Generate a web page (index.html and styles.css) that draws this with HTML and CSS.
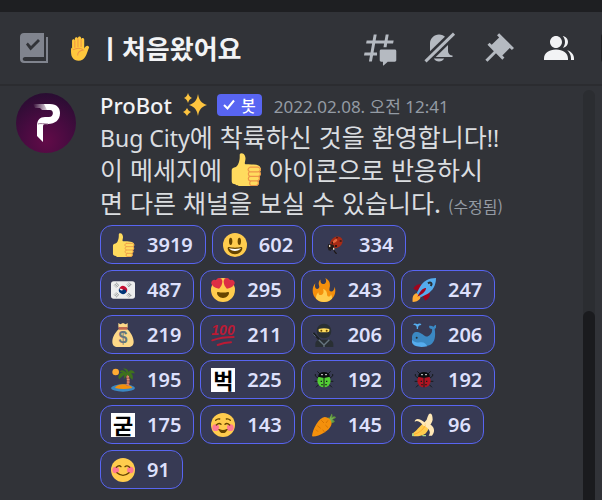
FILE: index.html
```
<!DOCTYPE html>
<html lang="ko">
  <head>
    <meta charset="UTF-8" />
    <meta name="viewport" content="width=device-width, initial-scale=1.0" />
    <title>처음왔어요</title>
    <link rel="stylesheet" href="styles.css">
  </head>
  <body>
    <div class="titlebar"></div>

    <header class="header">
      <svg class="icon rules" viewBox="0 0 36 36" aria-hidden="true">
        <path fill-rule="evenodd" d="M8 3H28V27H9C6 27 6 31 9 31H30V7H32V33H8C5.500 33 4 31.500 4 29V7C4 4.500 5.500 3 8 3ZM10 14.500L14.500 20.500L24 11L22 9L15 16L11.800 12.500Z" />
      </svg>
      <h1 class="channel">
        <svg class="hand" viewBox="0 0 36 36" role="img" aria-label="손">
          <path fill="#ffc83d" d="M8 19V7c0-3 4-3 4 0V4c0-3 4.500-3 4.500 0V3c0-3 4.500-3 4.500 0v2c0-3 4.500-3 4.500 0v13c2-3 4-5 6.500-3 1 1 .5 2-.5 4-2 5-3 11-8 15-5 3-12 2-15-3-2-3-2-7-2-11 0-4 1.500-4 1.500-1z" />
          <path fill="none" stroke="#ef9645" stroke-width="1.500" d="M12 7v10M16.500 4v12M21 5v11M9 20c6-3 11-3 15 0-5 1-8 4-8 8" />
        </svg>
        <span>ㅣ처음왔어요</span>
      </h1>
      <div class="toolbar">
        <button type="button" aria-label="스레드">
          <svg class="icon" viewBox="0 0 24 24"><path d="M5.433 21C5.358 21 5.302 20.933 5.315 20.859L6 17H2.143C2.068 17 2.012 16.933 2.025 16.859L2.333 15.099C2.343 15.042 2.392 15 2.451 15H6.350L7.410 9H3.553C3.478 9 3.422 8.933 3.435 8.859L3.743 7.099C3.753 7.042 3.802 7 3.861 7H7.760L8.452 3.099C8.463 3.042 8.512 3 8.570 3H10.327C10.401 3 10.458 3.067 10.445 3.141L9.760 7H15.760L16.452 3.099C16.463 3.042 16.512 3 16.571 3H18.327C18.401 3 18.458 3.067 18.445 3.141L17.760 7H21.617C21.692 7 21.748 7.067 21.735 7.141L21.427 8.901C21.417 8.958 21.367 9 21.309 9H17.410L17.050 11.500H15L15.410 9H9.410L8.350 15H10.700V17H8L7.307 20.901C7.297 20.958 7.248 21 7.189 21H5.433ZM13.440 12.960C12.910 12.960 12.480 13.390 12.480 13.920V20.221C12.480 20.752 12.910 21.181 13.440 21.181H14.640V23.460C14.640 23.668 14.887 23.777 15.041 23.638L17.486 21.429C17.662 21.270 17.892 21.181 18.129 21.181H22.560C23.090 21.181 23.520 20.752 23.520 20.221V13.920C23.520 13.390 23.090 12.960 22.560 12.960H13.440Z" /></svg>
        </button>
        <button type="button" aria-label="알림 설정">
          <svg class="icon" viewBox="0 0 24 24">
            <path d="M6 16V9C6 5.686 8.686 3 12 3C13.800 3 15.400 3.800 16.500 5L6 15.500ZM18 10V14C18 15.657 19.344 17 21 17V18H9.800ZM12 21C10.524 21 9.248 20.190 8.555 19H15.445C14.752 20.190 13.476 21 12 21Z" />
            <path class="cut" d="M1 19L19 1.500L20.500 3L2.500 20.500Z" />
            <path d="M21.300 1.700L22.700 3.100L3.700 21.600L2.300 20.200Z" />
          </svg>
        </button>
        <button type="button" aria-label="고정된 메시지">
          <svg class="icon" viewBox="0 0 24 24"><path d="M22 12L12.101 2.101L10.686 3.514L12.101 4.929L7.151 9.878L5.736 8.465L4.322 9.880L8.565 14.122L2.908 19.778L4.322 21.192L9.979 15.536L14.222 19.778L15.636 18.364L14.222 16.950L19.171 12L20.586 13.414Z" /></svg>
        </button>
        <button type="button" class="active" aria-label="멤버 목록">
          <svg class="icon" viewBox="0 0 24 24"><path d="M14 8.006C14 10.211 12.206 12.006 10 12.006C7.795 12.006 6 10.211 6 8.006C6 5.801 7.794 4.006 10 4.006C12.206 4.006 14 5.801 14 8.006ZM2 19.006C2 15.473 5.290 13.006 10 13.006C14.711 13.006 18 15.473 18 19.006V20.006H2ZM20 20.006H22V19.006C22 16.443 20.270 14.442 17.521 13.535C19.062 14.913 20 16.806 20 19.006ZM14.883 11.908C16.666 11.504 18 9.908 18 8.006C18 5.969 16.469 4.282 14.497 4.037C15.432 5.095 16 6.485 16 8.006C16 9.449 15.489 10.774 14.638 11.810Z" /></svg>
        </button>
        <input class="search" type="text" aria-label="검색" />
      </div>
    </header>

    <main class="chat">
      <article class="message">
        <svg class="avatar" viewBox="0 0 60 60" role="img" aria-label="ProBot">
          <defs>
            <radialGradient id="avatarBg" cx="0.5" cy="0.8" r="0.8">
              <stop offset="0" stop-color="#620b48" />
              <stop offset="0.5" stop-color="#470b40" />
              <stop offset="1" stop-color="#290d32" />
            </radialGradient>
            <linearGradient id="streak">
              <stop offset="0" stop-color="#fff" stop-opacity="0" />
              <stop offset="1" stop-color="#fff" />
            </linearGradient>
          </defs>
          <circle cx="30" cy="30" r="30" fill="url(#avatarBg)" />
          <path fill="url(#streak)" d="M17 11H34V17H26L24 15H19Z" />
          <path fill="#fff" d="M28 11H34C41 11 44 15 44 20C44 27 39 31 32 31H29C27.500 31 27 32 27 34V49L21 43V33C21 27 24 24 29 24H33C38 24 38 17 34 17H31Z" />
          <path fill="none" stroke="#9c7893" d="M22 31C24 30 28 31 32 31" />
        </svg>
        <div class="content">
          <div class="meta">
            <strong class="name">ProBot</strong>
            <svg class="sparkles" viewBox="0 0 24 24" role="img" aria-label="반짝임">
              <path fill="#fdc43f" d="M15 1C16 7 18 10 24 12C18 14 16 17 15 23C14 17 12 14 6 12C12 10 14 7 15 1ZM5 0C6 3 7 4 9 5C7 6 6 7 5 10C4 7 3 6 1 5C3 4 4 3 5 0ZM4 15C5 17 6 18 8 19C6 20 5 21 4 23C3 21 2 20 0 19C2 18 3 17 4 15Z" />
            </svg>
            <span class="badge">
              <svg class="check" viewBox="0 0 12 12" aria-hidden="true"><path d="M1 6L4.500 9.500L11 1.500" /></svg>
              봇
            </span>
            <time class="date" datetime="2022-02-08T00:41">2022.02.08. 오전 12:41</time>
          </div>
          <p class="text">
            <span class="latin">Bug City</span>에 착륙하신 것을 환영합니다<span class="latin">!!</span><br />
            이 메세지에 <svg class="thumb" viewBox="0 0 36 36" role="img" aria-label="좋아요"><use href="#thumbsup" /></svg> 아이콘으로 반응하시<br />
            면 다른 채널을 보실 수 있습니다. <small class="edited">(수정됨)</small>
          </p>

          <div class="reactions">
            <button type="button" class="reaction">
              <svg class="emoji" viewBox="0 0 36 36">
                <g id="thumbsup">
                  <path fill="#ffdb5e" d="M34.956 17.916c0-.503-.12-.975-.321-1.404-1.341-4.326-7.619-4.01-16.549-4.221-1.493-.035-.639-1.798-.115-5.668.341-2.517-1.282-6.382-4.01-6.382-4.498 0-.171 3.548-4.148 12.322-2.125 4.688-6.875 2.062-6.875 6.771v10.719c0 1.833.18 3.595 2.758 3.885C8.195 34.219 7.633 36 11.238 36h18.044c1.838 0 3.333-1.496 3.333-3.334 0-.762-.267-1.456-.698-2.018 1.02-.571 1.72-1.649 1.72-2.899 0-.76-.266-1.454-.696-2.015 1.023-.57 1.725-1.649 1.725-2.901 0-.909-.368-1.733-.961-2.336.757-.611 1.251-1.535 1.251-2.581z" />
                  <path fill="none" stroke="#ee9547" stroke-width="1.300" stroke-linecap="round" d="M23 15.500h9c3 1 3 4 0 5h-9c-3-1-3-4 0-5M23 20.500c-3 1-2 4.500 0 5h9c2.500-1 3-3.500 1-5M23 25.500c-3 1-2 4.500 0 5h8c2.500-1 3-4 1-5M24 30.500c-2 1-2 4 0 5h6c2-1 3-3 1-5" />
                </g>
              </svg>
              <span class="count">3919</span>
            </button>
            <button type="button" class="reaction">
              <svg class="emoji" viewBox="0 0 36 36">
                <circle cx="18" cy="18" r="18" fill="#ffcc4d" />
                <ellipse cx="11.500" cy="12.500" rx="2.500" ry="5.500" fill="#664500" />
                <ellipse cx="24.500" cy="12.500" rx="2.500" ry="5.500" fill="#664500" />
                <path fill="#664500" d="M18 22c-3.623 0-6.027-.422-9-1-.679-.131-2 0-2 2 0 4 4.595 9 11 9 6.404 0 11-5 11-9 0-2-1.321-2.132-2-2-2.973.578-5.377 1-9 1z" />
                <path fill="#fff" d="M9 23s3 1 9 1 9-1 9-1-2 4-9 4-9-4-9-4z" />
              </svg>
              <span class="count">602</span>
            </button>
            <button type="button" class="reaction">
              <svg class="emoji" viewBox="0 0 36 36">
                <path stroke="#1d1716" stroke-width="1.500" d="M8 17l4 4M16 27l5 4M8 25l4 1M17 26l2 5" />
                <ellipse cx="20" cy="14" rx="10" ry="8" fill="#a82b16" transform="rotate(-35 20 14)" />
                <ellipse cx="18" cy="12" rx="4" ry="2" fill="#e46b40" transform="rotate(-35 18 12)" />
                <ellipse cx="12" cy="21" rx="5" ry="4" fill="#241b18" />
                <path fill="#e8d7bd" d="M9 18h2v3h-2zM15 22h2v3h-2z" />
                <path fill="#311812" d="M20 6h2v2h-2zM25 11h3v2h-3zM18 18h3v3h-3zM13 13h2v3h-2z" />
              </svg>
              <span class="count">334</span>
            </button>
            <button type="button" class="reaction">
              <svg class="emoji" viewBox="0 0 36 36">
                <rect y="5" width="36" height="26" rx="4" fill="#eee" />
                <path fill="#c60c30" d="M13 14.500a6 6 0 0 1 10 7c-1 1-3 0-5-3.500s-6 0-5-3.500z" />
                <path fill="#003478" d="M13 14.500a6 6 0 0 0 10 7c1-4-3-5-5-3.500s-6 0-5-3.500z" />
                <path stroke="#292f33" stroke-width="1" stroke-dasharray="2 1" d="M5 11l4-4M6.500 12.500l4-4M8 14l4-4M24 10l4 4M25.500 8.500l4 4M27 7l4 4M5 25l4 4M6.500 23.500l4 4M8 22l4 4M24 26l4-4M25.500 27.500l4-4M27 29l4-4" />
              </svg>
              <span class="count">487</span>
            </button>
            <button type="button" class="reaction">
              <svg class="emoji" viewBox="0 0 36 36">
                <circle cx="18" cy="18" r="18" fill="#ffcc4d" />
                <path fill="#664500" d="M18 21.849c-2.966 0-4.935-.346-7.369-.819-.557-.106-1.638 0-1.638 1.638 0 3.275 3.763 7.369 9.007 7.369s9.007-4.094 9.007-7.369c0-1.638-1.082-1.745-1.638-1.638-2.434.473-4.402.819-7.369.819" />
                <path fill="#dd2e44" d="M16.650 3.281C15.791.85 13.126-.426 10.694.431c-1.476.52-2.521 1.711-2.928 3.104-1.191-.829-2.751-1.100-4.225-.58C1.111 3.813-.167 6.480.692 8.911c.122.344.284.663.472.958 1.951 3.582 7.588 6.100 11.001 6.131 2.637-2.167 5.446-7.665 4.718-11.677-.038-.348-.113-.698-.233-1.042zm2.700 0C20.209.85 22.875-.426 25.306.431c1.476.52 2.521 1.711 2.929 3.104 1.191-.829 2.751-1.100 4.225-.58 2.430.858 3.707 3.525 2.850 5.956-.123.344-.284.663-.473.958-1.951 3.582-7.588 6.100-11.002 6.131-2.637-2.167-5.445-7.665-4.717-11.677.037-.348.112-.698.232-1.042z" />
              </svg>
              <span class="count">295</span>
            </button>
            <button type="button" class="reaction">
              <svg class="emoji" viewBox="0 0 36 36">
                <path fill="#f4900c" d="M35 19c0-2.062-.367-4.039-1.040-5.868-.46 5.389-3.333 8.157-6.335 6.868-2.812-1.208-.917-5.917-.777-8.164.236-3.809-.012-8.169-6.931-11.794 2.875 5.500.333 8.917-2.333 9.125-2.958.231-5.667-2.542-4.667-7.042-3.238 2.386-3.332 6.402-2.333 9 1.042 2.708-.042 4.958-2.583 5.208-2.840.28-4.418-3.041-2.963-8.333C2.520 10.965 1 14.805 1 19c0 9.389 7.611 17 17 17s17-7.611 17-17z" />
                <path fill="#ffcc4d" d="M28.394 23.999c.148 3.084-2.561 4.293-4.019 3.709-2.106-.843-1.541-2.291-2.083-5.291s-2.625-5.083-5.708-6c2.250 6.333-1.247 8.667-3.080 9.084-1.872.426-3.753-.001-3.968-4.007C7.352 23.668 6 26.676 6 30c0 .368.023.73.055 1.090C9.125 34.124 13.342 36 18 36s8.875-1.876 11.945-4.910c.032-.36.055-.722.055-1.090 0-2.187-.584-4.236-1.606-6.001z" />
              </svg>
              <span class="count">243</span>
            </button>
            <button type="button" class="reaction">
              <svg class="emoji" viewBox="0 0 36 36">
                <path fill="#a0041e" d="M2 16C5 10 10 8 15 10L9 20ZM20 34C26 31 28 26 26 20L16 27Z" />
                <path fill="#ffac33" d="M1 36C0 29 2 24 7 23C12 24 14 28 12 31C10 34 5 36 1 36Z" />
                <path fill="#55acee" d="M36 0C25 0 17 5 12 13L7 23L13 29L23 24C31 19 36 11 36 0Z" />
                <path fill="#a0041e" d="M8 28C13 18 17 15 21 15C21 19 18 23 8 28Z" />
                <path fill="none" stroke="#292f33" stroke-width="3" d="M24 8C28 5 31 8 28 12" />
              </svg>
              <span class="count">247</span>
            </button>
            <button type="button" class="reaction">
              <svg class="emoji" viewBox="0 0 36 36">
                <path fill="#fdd888" d="M11 0l3 2 4-2 4 2 3-2v6l-1 3c6 5 10 13 10 19 0 5-3 8-8 8H10c-5 0-8-3-8-8 0-7 5-15 10-19l-1-4z" />
                <path fill="#bf6952" d="M11 6h14l-1 4H12z" />
                <text x="18" y="30" text-anchor="middle" class="dollar">$</text>
              </svg>
              <span class="count">219</span>
            </button>
            <button type="button" class="reaction">
              <svg class="emoji" viewBox="0 0 36 36">
                <text x="18" y="18" text-anchor="middle" class="hundred">100</text>
                <path fill="none" stroke="#bb1a34" stroke-width="3" stroke-linecap="round" d="M2 26Q16 21 34 21M10 33Q20 29 30 29" />
              </svg>
              <span class="count">211</span>
            </button>
            <button type="button" class="reaction">
              <svg class="emoji" viewBox="0 0 36 36">
                <path stroke="#1c2023" stroke-width="3" d="M2 15L14 28" />
                <path stroke="#66757f" stroke-width="1.500" stroke-dasharray="2 1" d="M1 16L6 21" />
                <path fill="#292f33" d="M5 36v-4c0-5 3-7 8-7h11c5 0 8 3 8 7v4z" />
                <circle cx="18" cy="12" r="11" fill="#292f33" />
                <path fill="#ffdc5d" d="M10 9q8-2 16 0 1 5-3 5H13q-4 0-3-5z" />
                <circle cx="14" cy="11.500" r="1.500" fill="#664500" />
                <circle cx="22" cy="11.500" r="1.500" fill="#664500" />
                <path fill="none" stroke="#66757f" stroke-width="2" d="M10 25l8 8 8-8M18 32v4" />
              </svg>
              <span class="count">206</span>
            </button>
            <button type="button" class="reaction">
              <svg class="emoji" viewBox="0 0 36 36">
                <path fill="#3b88c3" d="M0 22C0 15 5 12 10 14C16 16 20 22 24 20C28 18 31 14 30 9C26 9 25 6 26 4C29 4 31 4 32 6C33 4 35 3 36 3C37 7 35 9 34 9C36 20 34 33 23 34H8C2 34 0 29 0 22Z" />
                <path fill="#55acee" d="M0 25C4 30 10 29 14 29C19 29 21 32 23 35C13 37 2 36 0 29ZM7 9C8 4 5 3 2 3C2 0 6 0 8 2C10 0 14 0 14 3C10 3 9 5 9 9Z" />
                <circle cx="7" cy="22" r="1.500" fill="#292f33" />
              </svg>
              <span class="count">206</span>
            </button>
            <button type="button" class="reaction">
              <svg class="emoji" viewBox="0 0 36 36">
                <circle cx="7" cy="6" r="5" fill="#ffac33" />
                <ellipse cx="18" cy="30" rx="18" ry="5.500" fill="#3b88c3" />
                <path fill="#f4900c" d="M6 30C8 23 28 22 32 30Q18 33 6 30Z" />
                <path fill="none" stroke="#c1694f" stroke-width="4" d="M24 9Q27 17 25 27" />
                <path fill="none" stroke="#e5a68b" stroke-width="4" stroke-dasharray="1 3" d="M24 9Q27 17 25 27" />
                <path fill="#3e721d" d="M24 8C19 2 15 2 13 6L18 6C12 8 10 12 12 17L20 10L19 17L25 10L32 18C34 13 32 10 30 8L36 8C33 2 29 2 26 6C26 2 22 0 18 1C21 2 23 5 24 8Z" />
              </svg>
              <span class="count">195</span>
            </button>
            <button type="button" class="reaction">
              <span class="emoji letter">벅</span>
              <span class="count">225</span>
            </button>
            <button type="button" class="reaction bug-green">
              <svg class="emoji" viewBox="0 0 36 36">
                <g id="bug">
                  <path fill="none" stroke="#171b1c" stroke-width="1.500" d="M12 9L8 5M24 9L28 5M9 15L5 12V9M27 15L31 12V9M9 20H4M27 20H32M10 25L6 29M26 25L30 29" />
                  <circle cx="18" cy="19" r="10" fill="currentColor" />
                  <path fill="#0b0e10" d="M9 13q1-7 9-7t9 7l-9 2z" />
                  <path stroke="#171b1c" stroke-width="1.500" d="M18 14V29" />
                  <path fill="#171b1c" d="M13 19h2v2h-2zM21 19h2v2h-2zM14 24h2v2h-2zM20 24h2v2h-2z" />
                  <path fill="#fff" d="M14 9h2v2h-2zM20 9h2v2h-2z" />
                </g>
              </svg>
              <span class="count">192</span>
            </button>
            <button type="button" class="reaction bug-red">
              <svg class="emoji" viewBox="0 0 36 36"><use href="#bug" /></svg>
              <span class="count">192</span>
            </button>
            <button type="button" class="reaction">
              <span class="emoji letter">굳</span>
              <span class="count">175</span>
            </button>
            <button type="button" class="reaction">
              <svg class="emoji" viewBox="0 0 36 36">
                <circle cx="18" cy="18" r="18" fill="#ffcc4d" />
                <circle cx="7" cy="22" r="5" fill="#ff7892" />
                <circle cx="29" cy="22" r="5" fill="#ff7892" />
                <path fill="none" stroke="#664500" stroke-width="2" stroke-linecap="round" d="M7 11q3-3 6-2M23 9q3-1 6 2M8 18q4-4 7-1M21 17q3-3 7 1M12 25q6 3 12 0" />
                <path fill="#664500" d="M12 25q6 2 12 0-1 5-6 5t-6-5z" />
              </svg>
              <span class="count">143</span>
            </button>
            <button type="button" class="reaction">
              <svg class="emoji" viewBox="0 0 36 36">
                <path fill="#5c913b" d="M23 13C23 7 25 5 27 7L29 1Q32 2 30 6Q35 3 36 7L31 10Q36 12 33 14Q29 17 23 13Z" />
                <path fill="#77b255" d="M25 11L29 3L29 8L34 6L29 11L33 12L26 14Z" />
                <path fill="#f4900c" d="M0 35C1 24 10 7 19 6C25 6 31 12 29 18C26 27 10 36 0 35Z" />
                <path fill="none" stroke="#d67503" stroke-width="1.500" d="M14 11l4 4M24 11l-3 4M8 19l5 4M20 18l4 4M16 25l3 4M6 25l3 3" />
              </svg>
              <span class="count">145</span>
            </button>
            <button type="button" class="reaction">
              <svg class="emoji" viewBox="0 0 36 36">
                <path fill="#ffe8b6" d="M28 1C25 0 24 5 22 10L15 18C23 24 29 18 31 10C31 5 30 1 28 1Z" />
                <path fill="#ffcc4d" d="M0 31C8 27 10 20 18 15C26 17 27 25 20 31C13 35 5 36 0 34Z" />
                <path fill="#ffe8b6" d="M20 15C12 8 5 7 4 13C9 10 13 14 18 20ZM22 15C31 17 37 25 30 34L25 34C29 29 26 23 18 19Z" />
                <path fill="none" stroke="#ffac33" stroke-width="1.500" d="M3 32Q14 29 20 19" />
                <path fill="#a6d388" d="M0 31l3-1v4l-3 1zM15 33l6 0v2h-5z" />
              </svg>
              <span class="count">96</span>
            </button>
            <button type="button" class="reaction">
              <svg class="emoji" viewBox="0 0 36 36">
                <circle cx="18" cy="18" r="18" fill="#ffcc4d" />
                <circle cx="7" cy="18" r="5" fill="#ff7892" />
                <circle cx="29" cy="18" r="5" fill="#ff7892" />
                <path fill="none" stroke="#664500" stroke-width="2" stroke-linecap="round" d="M8 14q4-4 7-1M21 13q3-3 7 1M9 22q9 8 18 0" />
              </svg>
              <span class="count">91</span>
            </button>
          </div>
        </div>
      </article>
      <div class="scrollbar"><div class="thumb-bar"></div></div>
    </main>
  </body>
</html>
```
FILE: styles.css
```
* {
  box-sizing: border-box;
}
body {
  margin: 0;
  min-height: 100vh;
  display: flex;
  flex-direction: column;
  overflow-x: hidden;
  background-color: #313338;
  color: #dbdee1;
  font-family: "Noto Sans", "Noto Sans CJK KR", sans-serif;
}
button {
  font: inherit;
  cursor: pointer;
}
.titlebar {
  height: 12px;
  background: #1e1f22;
}

/* header */
.header {
  display: flex;
  align-items: center;
  gap: 13px;
  height: 74px;
  padding-left: 16px;
  border-bottom: 2px solid #2b2c30;
  overflow: hidden;
}
.icon {
  display: block;
  width: 36px;
  height: 36px;
  fill: currentColor;
}
.rules {
  color: #80848e;
}
.channel {
  display: flex;
  align-items: center;
  flex: 1;
  gap: 5px;
  margin: 0;
  color: #f2f3f5;
  font-family: "Noto Sans CJK KR", sans-serif;
  font-size: 26px;
  font-weight: 700;
  line-height: 36px;
  white-space: nowrap;
}
.hand {
  width: 28px;
  height: 25px;
}
.toolbar {
  display: flex;
  align-items: center;
  gap: 24px;
  margin-right: -179px;
}
.toolbar button {
  padding: 0;
  border: none;
  background: none;
  color: #b5bac1;
}
.toolbar .active {
  color: #f2f3f5;
}
.cut {
  fill: #313338;
}
.search {
  width: 180px;
  height: 30px;
  border: none;
  border-radius: 4px;
  background: #1e1f22;
}

/* message */
.chat {
  display: flex;
  flex: 1;
  padding-right: 7px;
}
.message {
  display: flex;
  flex: 1;
  gap: 24px;
  min-width: 0;
  padding: 4px 78px 8px 16px;
}
.avatar {
  flex: none;
  width: 60px;
  height: 60px;
  margin-top: 3px;
}
.content {
  flex: 1;
  min-width: 0;
}
.meta {
  display: flex;
  align-items: center;
  height: 30px;
  white-space: nowrap;
}
.name {
  color: #f2f3f5;
  font-size: 22px;
  font-weight: 500;
}
.sparkles {
  width: 24px;
  height: 24px;
  margin: 0 10px 0 11px;
}
.badge {
  display: flex;
  align-items: center;
  gap: 6px;
  height: 22px;
  padding: 0 6px;
  border-radius: 4px;
  background: #5865f2;
  color: #fff;
  font-size: 16px;
  font-weight: 500;
}
.check {
  width: 12px;
  height: 12px;
  fill: none;
  stroke: #fff;
  stroke-width: 2;
}
.date {
  margin-left: 12px;
  color: #949ba4;
  font-size: 17px;
}
.text {
  margin: 0 0 6px;
  font-family: "Noto Sans CJK KR", sans-serif;
  font-size: 25px;
  line-height: 33px;
  white-space: nowrap;
}
.latin {
  font-family: "Noto Sans", sans-serif;
  font-size: 23px;
  line-height: 1;
}
.thumb {
  width: 33px;
  height: 33px;
  vertical-align: bottom;
}
.edited {
  color: #949ba4;
  font-size: 16px;
  line-height: 1;
}

/* reactions */
.reactions {
  display: flex;
  flex-wrap: wrap;
  gap: 6px;
}
.reaction {
  display: flex;
  align-items: center;
  gap: 12px;
  height: 39px;
  padding: 0 12px 0 10px;
  border: 1px solid #5865f2;
  border-radius: 12px;
  background: #373a54;
  color: #dee0fc;
}
.emoji {
  flex: none;
  width: 24px;
  height: 24px;
}
.count {
  font-size: 20px;
  font-weight: 600;
  line-height: 24px;
}
.letter {
  background: #fff;
  color: #000;
  font-size: 22px;
  font-weight: 700;
  line-height: 24px;
}
.dollar {
  fill: #67757f;
  font-family: "Liberation Sans", sans-serif;
  font-size: 24px;
  font-weight: 700;
}
.hundred {
  fill: #bb1a34;
  font-family: "Liberation Sans", sans-serif;
  font-size: 21px;
  font-style: italic;
  font-weight: 700;
}
.bug-green .emoji {
  color: #53cf35;
}
.bug-red .emoji {
  color: #b01322;
}

/* scrollbar */
.scrollbar {
  display: flex;
  flex: none;
  width: 12px;
  margin-top: 4px;
  border-radius: 6px 6px 0 0;
  background: #2b2d31;
}
.thumb-bar {
  align-self: flex-end;
  width: 100%;
  height: 46%;
  border-radius: 6px 6px 0 0;
  background: #1a1b1e;
}
```
